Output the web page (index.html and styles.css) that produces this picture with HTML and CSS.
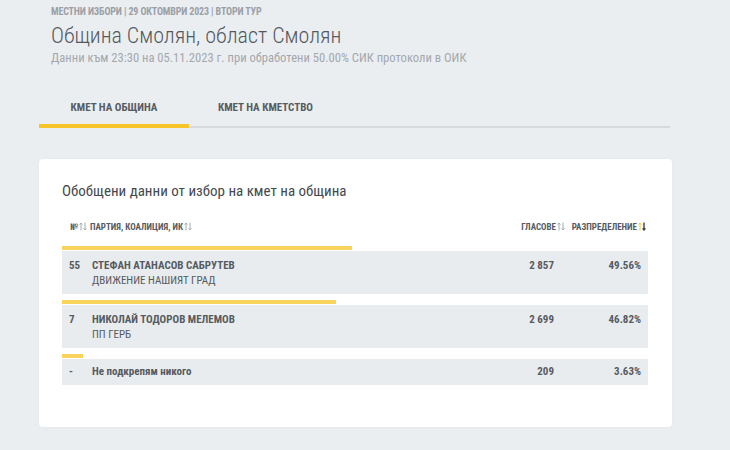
FILE: index.html
```html
<!DOCTYPE html>
<html lang="bg">
<head>
<meta charset="utf-8">
<link rel="stylesheet" href="styles.css">
</head>
<body>
<div class="page">
  <header class="head">
    <div class="kicker">МЕСТНИ ИЗБОРИ | 29 ОКТОМВРИ 2023 | ВТОРИ ТУР</div>
    <h1 class="title">Община Смолян, област Смолян</h1>
    <div class="sub">Данни към 23:30 на 05.11.2023 г. при обработени 50.00% СИК протоколи в ОИК</div>
  </header>
  <nav class="tabs">
    <div class="tab active">КМЕТ НА ОБЩИНА</div>
    <div class="tab">КМЕТ НА КМЕТСТВО</div>
  </nav>
  <section class="card">
    <h2 class="card-title">Обобщени данни от избор на кмет на община</h2>
    <div class="thead">
      <div class="th c-head">№<svg class="sort" viewBox="0 0 8 9" width="8" height="9"><path class="up" d="M2 8.5V1M0.6 2.6L2 1l1.4 1.6"/><path class="dn" d="M6 0.5V8M4.6 6.4L6 8l1.4-1.6"/></svg> ПАРТИЯ, КОАЛИЦИЯ, ИК<svg class="sort" viewBox="0 0 8 9" width="8" height="9"><path class="up" d="M2 8.5V1M0.6 2.6L2 1l1.4 1.6"/><path class="dn" d="M6 0.5V8M4.6 6.4L6 8l1.4-1.6"/></svg></div>
      <div class="th c-votes">ГЛАСОВЕ<svg class="sort" viewBox="0 0 8 9" width="8" height="9"><path class="up" d="M2 8.5V1M0.6 2.6L2 1l1.4 1.6"/><path class="dn" d="M6 0.5V8M4.6 6.4L6 8l1.4-1.6"/></svg></div>
      <div class="th c-pct">РАЗПРЕДЕЛЕНИЕ<svg class="sort on" viewBox="0 0 8 9" width="8" height="9"><path class="up" d="M2 8.5V1M0.6 2.6L2 1l1.4 1.6"/><path class="dn" d="M6 0.5V8M4.6 6.4L6 8l1.4-1.6"/></svg></div>
    </div>
    <div class="entry">
      <div class="bar" style="width:49.56%"></div>
      <div class="row">
        <div class="c-no">55</div>
        <div class="c-name"><div class="cand">СТЕФАН АТАНАСОВ САБРУТЕВ</div><div class="party">ДВИЖЕНИЕ НАШИЯТ ГРАД</div></div>
        <div class="c-votes">2 857</div>
        <div class="c-pct">49.56%</div>
      </div>
    </div>
    <div class="entry">
      <div class="bar" style="width:46.82%"></div>
      <div class="row">
        <div class="c-no">7</div>
        <div class="c-name"><div class="cand">НИКОЛАЙ ТОДОРОВ МЕЛЕМОВ</div><div class="party">ПП ГЕРБ</div></div>
        <div class="c-votes">2 699</div>
        <div class="c-pct">46.82%</div>
      </div>
    </div>
    <div class="entry">
      <div class="bar" style="width:3.63%"></div>
      <div class="row single">
        <div class="c-no">-</div>
        <div class="c-name"><div class="none">Не подкрепям никого</div></div>
        <div class="c-votes">209</div>
        <div class="c-pct">3.63%</div>
      </div>
    </div>
  </section>
</div>
</body>
</html>
```
FILE: styles.css
```css
html, body {
  margin: 0;
  padding: 0;
  background: #ebeef1;
}
body {
  font-family: "Roboto Condensed", Roboto, "Liberation Sans", sans-serif;
  color: #5c6166;
  width: 730px;
  height: 450px;
  overflow: hidden;
}
.page {
  padding: 6px 0 0 39px;
  width: 633px;
}
.head {
  padding-left: 12px;
}
.kicker {
  font-size: 10px;
  font-weight: 700;
  color: #9aa0a6;
  line-height: 12px;
  letter-spacing: -0.15px;
}
.title {
  margin: 5px 0 0;
  font-size: 22px;
  font-weight: 300;
  color: #54595e;
  line-height: 26px;
}
.sub {
  margin-top: 1px;
  font-size: 12.6px;
  color: #a3a8ad;
  line-height: 16px;
}
.tabs {
  display: flex;
  margin-top: 23px;
  border-bottom: 2px solid #d7dadd;
  width: 631px;
}
.tab {
  font-size: 11px;
  font-weight: 700;
  color: #565b60;
  padding: 12px 0 10px;
  width: 150px;
  text-align: center;
  margin-bottom: -2px;
  border-bottom: 4px solid transparent;
}
.tab.active {
  border-bottom-color: #f7c52a;
}
.tab + .tab {
  width: 115px;
  text-align: left;
  padding-left: 29px;
}
.card {
  margin-top: 31px;
  background: #fff;
  border-radius: 4px;
  box-shadow: 0 0 3px rgba(0,0,0,0.04);
  padding: 22px 24px 42px 23px;
  width: 586px;
}
.card-title {
  margin: 0;
  font-size: 15px;
  font-weight: 400;
  color: #45494d;
  line-height: 20px;
}
.thead {
  display: flex;
  align-items: center;
  margin-top: 18px;
  height: 16px;
  font-size: 9px;
  font-weight: 700;
  color: #565b60;
}
.c-head { flex: 1; padding-left: 8px; }
.sort {
  display: inline-block;
  vertical-align: -1px;
  margin: 0 1px 0 1px;
  fill: none;
  stroke-width: 1;
}
.sort path { stroke: #a6acb1; }
.sort.on .up { stroke: #f7c52a; }
.sort.on .dn { stroke: #3d4246; stroke-width: 1.4; }
.c-no { width: 30px; padding-left: 7px; box-sizing: border-box; }
.c-name { flex: 1; }
.c-votes { width: 96px; text-align: right; }
.c-pct { width: 94px; text-align: right; padding-right: 7px; box-sizing: border-box; }
.thead .c-votes { width: 96px; }
.thead .c-pct { width: 82px; padding-right: 1px; }
.entry {
  margin-top: 6px;
}
.thead + .entry { margin-top: 11px; }
.bar {
  height: 4px;
  background: #f9d45c;
  margin-bottom: 1px;
}
.row {
  display: flex;
  align-items: flex-start;
  background: #e9ecef;
  height: 43px;
  padding-top: 7px;
  box-sizing: border-box;
  font-size: 11px;
  font-weight: 700;
  color: #565b60;
  line-height: 15px;
}
.row.single {
  height: 26px;
  padding-top: 5px;
}
.cand { font-weight: 700; }
.party { font-weight: 400; line-height: 15px; }
.none { font-weight: 700; }
```
